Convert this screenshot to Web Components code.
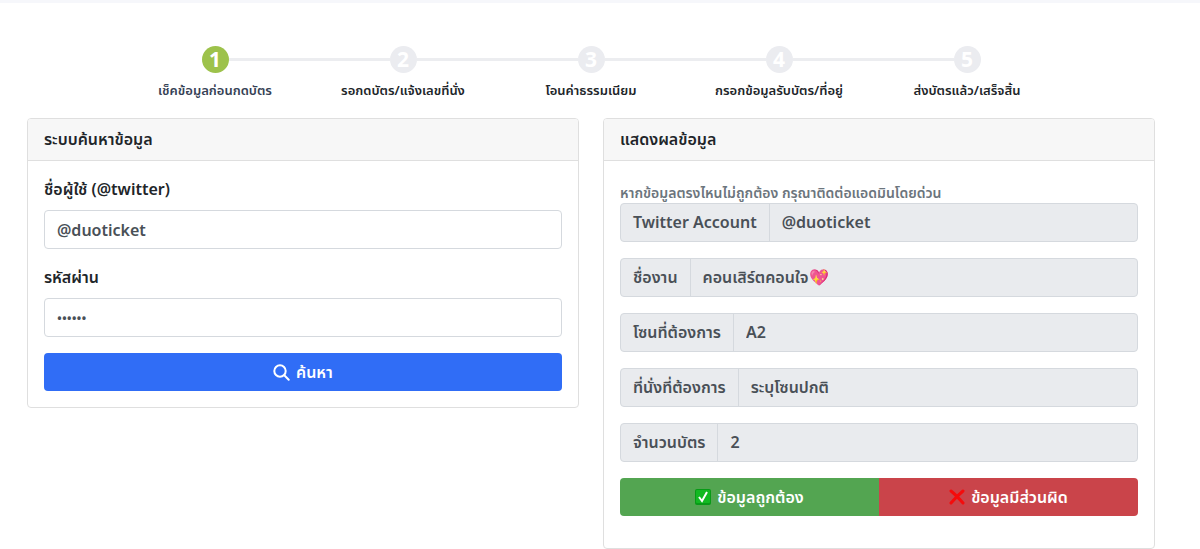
<!DOCTYPE html>
<html lang="th">
<head>
  <meta charset="utf-8">
  <meta name="viewport" content="width=device-width, initial-scale=1">
  <title>ระบบค้นหาข้อมูล</title>
  <style>
    :root {
      --color-text: #212529;
      --color-muted: #6c757d;
      --color-field: #495057;
      --color-border: #d5d9de;
      --color-disabled: #e9ebee;
      --color-primary: #306df6;
      --color-success: #53a551;
      --color-danger: #ca444a;
      --color-active: #9dc24b;
    }

    body {
      margin: 0;
      background: white;
      color: var(--color-text);
      font: 600 16px/25px "Noto Sans", "Noto Sans Thai", sans-serif;
    }
  </style>
</head>
<body>
  <ticket-page>
    <step-list slot="steps">
      <step-item number="1" class="active">เช็คข้อมูลก่อนกดบัตร</step-item>
      <step-item number="2">รอกดบัตร/แจ้งเลขที่นั่ง</step-item>
      <step-item number="3">โอนค่าธรรมเนียม</step-item>
      <step-item number="4">กรอกข้อมูลรับบัตร/ที่อยู่</step-item>
      <step-item number="5">ส่งบัตรแล้ว/เสร็จสิ้น</step-item>
    </step-list>

    <info-card>
      <span slot="title">ระบบค้นหาข้อมูล</span>
      <search-form></search-form>
    </info-card>

    <info-card>
      <span slot="title">แสดงผลข้อมูล</span>
      <result-panel>
        <span slot="note">หากข้อมูลตรงไหนไม่ถูกต้อง กรุณาติดต่อแอดมินโดยด่วน</span>
        <result-field label="Twitter Account" value="@duoticket"></result-field>
        <result-field label="ชื่องาน" value="คอนเสิร์ตคอนใจ💖"></result-field>
        <result-field label="โซนที่ต้องการ" value="A2"></result-field>
        <result-field label="ที่นั่งที่ต้องการ" value="ระบุโซนปกติ"></result-field>
        <result-field label="จำนวนบัตร" value="2"></result-field>
      </result-panel>
    </info-card>
  </ticket-page>

  <script>
    class TicketPage extends HTMLElement {
      constructor() {
        super();
        this.attachShadow({ mode: "open" });
        this.shadowRoot.innerHTML = /*html*/ `
          <style>
            :host {
              display: block;
              border-top: 3px solid #f6f7fb;
            }

            main {
              padding: 43px 45px 0 27px;
            }

            .cards {
              display: grid;
              grid-template-columns: 1fr 1fr;
              gap: 24px;
              align-items: start;
              margin-top: 18px;
            }
          </style>
          <main>
            <slot name="steps"></slot>
            <div class="cards"><slot></slot></div>
          </main>
        `;
      }
    }

    class StepList extends HTMLElement {
      constructor() {
        super();
        this.attachShadow({ mode: "open" });
        this.shadowRoot.innerHTML = /*html*/ `
          <style>
            :host {
              display: flex;
              max-width: 940px;
              margin: 0 auto;
            }
          </style>
          <slot></slot>
        `;
      }
    }

    class StepItem extends HTMLElement {
      constructor() {
        super();
        this.attachShadow({ mode: "open" });
        this.shadowRoot.innerHTML = /*html*/ `
          <style>
            :host {
              flex: 1;
              min-width: 0;
              text-align: center;
              font-size: 13px;
              line-height: 20px;
            }

            .marker {
              display: flex;
              align-items: center;
              margin-bottom: 7px;
            }

            /* the connecting line, one half on each side of the circle */
            .marker::before,
            .marker::after {
              content: "";
              flex: 1;
              height: 3px;
              background: #ecedf0;
            }

            :host(:first-child) .marker::before,
            :host(:last-child) .marker::after {
              background: none;
            }

            .circle {
              width: 27px;
              height: 27px;
              border-radius: 50%;
              background: #ebecf0;
              color: white;
              font-size: 21px;
              font-weight: 700;
              line-height: 27px;
            }

            :host(.active) .circle {
              background: var(--color-active);
            }

            :host(.active) .label {
              color: #364155;
            }
          </style>
          <div class="marker"><span class="circle"></span></div>
          <div class="label"><slot></slot></div>
        `;
      }

      connectedCallback() {
        this.shadowRoot.querySelector(".circle").textContent = this.getAttribute("number");
      }
    }

    class InfoCard extends HTMLElement {
      constructor() {
        super();
        this.attachShadow({ mode: "open" });
        this.shadowRoot.innerHTML = /*html*/ `
          <style>
            :host {
              display: block;
              min-width: 0;
              border: 1px solid #dfdfdf;
              border-radius: 4px;
            }

            header {
              padding: 8px 16px;
              background: #f7f7f7;
              border-bottom: 1px solid #dfdfdf;
              border-radius: 3px 3px 0 0;
            }

            .body {
              padding: 16px;
            }
          </style>
          <header><slot name="title"></slot></header>
          <div class="body"><slot></slot></div>
        `;
      }
    }

    class SearchForm extends HTMLElement {
      constructor() {
        super();
        this.attachShadow({ mode: "open" });
        this.shadowRoot.innerHTML = /*html*/ `
          <style>
            :host {
              display: block;
            }

            label {
              display: block;
              margin-bottom: 8px;
            }

            input {
              display: block;
              box-sizing: border-box;
              width: 100%;
              height: 39px;
              margin: 0 0 16px;
              padding: 6px 12px;
              border: 1px solid var(--color-border);
              border-radius: 4px;
              background: white;
              color: var(--color-field);
              font: inherit;
            }

            input[type="password"] {
              font-size: 13px;
            }

            button {
              display: flex;
              align-items: center;
              justify-content: center;
              gap: 6px;
              width: 100%;
              height: 38px;
              padding: 0 12px;
              border: 0;
              border-radius: 4px;
              background: var(--color-primary);
              color: white;
              font: inherit;
            }
          </style>
          <form>
            <label for="username">ชื่อผู้ใช้ (@twitter)</label>
            <input id="username" type="text" value="@duoticket">
            <label for="password">รหัสผ่าน</label>
            <input id="password" type="password" value="123456">
            <button type="button">
              <svg width="17" height="17" viewBox="0 0 17 17" fill="none" stroke="currentColor" stroke-width="2" stroke-linecap="round" aria-hidden="true">
                <circle cx="7" cy="7" r="5.700"/>
                <path d="M11.300 11.300 15.700 15.700"/>
              </svg>
              <span>ค้นหา</span>
            </button>
          </form>
        `;
      }
    }

    class ResultField extends HTMLElement {
      constructor() {
        super();
        this.attachShadow({ mode: "open" });
        this.shadowRoot.innerHTML = /*html*/ `
          <style>
            :host {
              display: flex;
              box-sizing: border-box;
              height: 39px;
              margin-bottom: 16px;
              border: 1px solid var(--color-border);
              border-radius: 4px;
              background: var(--color-disabled);
              color: var(--color-field);
            }

            label {
              padding: 6px 12px;
              border-right: 1px solid var(--color-border);
              white-space: nowrap;
            }

            input {
              flex: 1;
              min-width: 0;
              padding: 0 12px;
              border: 0;
              background: none;
              color: inherit;
              font: inherit;
            }
          </style>
          <label for="value"></label>
          <input id="value" type="text" readonly>
        `;
      }

      connectedCallback() {
        this.shadowRoot.querySelector("label").textContent = this.getAttribute("label");
        this.shadowRoot.querySelector("input").value = this.getAttribute("value");
      }
    }

    class ResultPanel extends HTMLElement {
      constructor() {
        super();
        this.attachShadow({ mode: "open" });
        this.shadowRoot.innerHTML = /*html*/ `
          <style>
            :host {
              display: block;
              padding: 5px 0 16px;
            }

            .note {
              color: var(--color-muted);
              font-size: 14px;
              line-height: 21px;
            }

            .actions {
              display: flex;
            }

            button {
              display: flex;
              flex: 1;
              align-items: center;
              justify-content: center;
              gap: 6px;
              height: 38px;
              padding: 0 12px;
              border: 0;
              color: white;
              font: inherit;
            }

            .correct {
              border-radius: 4px 0 0 4px;
              background: var(--color-success);
            }

            .wrong {
              border-radius: 0 4px 4px 0;
              background: var(--color-danger);
            }
          </style>
          <div class="note"><slot name="note"></slot></div>
          <slot></slot>
          <div class="actions">
            <button type="button" class="correct">
              <svg width="16" height="16" viewBox="0 0 16 16" aria-hidden="true">
                <rect width="16" height="16" rx="2" fill="#079b16"/>
                <rect x="1" y="1" width="14" height="13" rx="1" fill="#12b922"/>
                <path d="M4 8 7 12 12 3" fill="none" stroke="white" stroke-width="2"/>
              </svg>
              <span>ข้อมูลถูกต้อง</span>
            </button>
            <button type="button" class="wrong">
              <svg width="16" height="16" viewBox="0 0 16 16" aria-hidden="true">
                <path d="M2 2Q7 6 14 14M14 2Q8 7 2 14" fill="none" stroke="#f50b0b" stroke-width="3" stroke-linecap="round"/>
              </svg>
              <span>ข้อมูลมีส่วนผิด</span>
            </button>
          </div>
        `;
      }
    }

    customElements.define("ticket-page", TicketPage);
    customElements.define("step-list", StepList);
    customElements.define("step-item", StepItem);
    customElements.define("info-card", InfoCard);
    customElements.define("search-form", SearchForm);
    customElements.define("result-field", ResultField);
    customElements.define("result-panel", ResultPanel);
  </script>
</body>
</html>
